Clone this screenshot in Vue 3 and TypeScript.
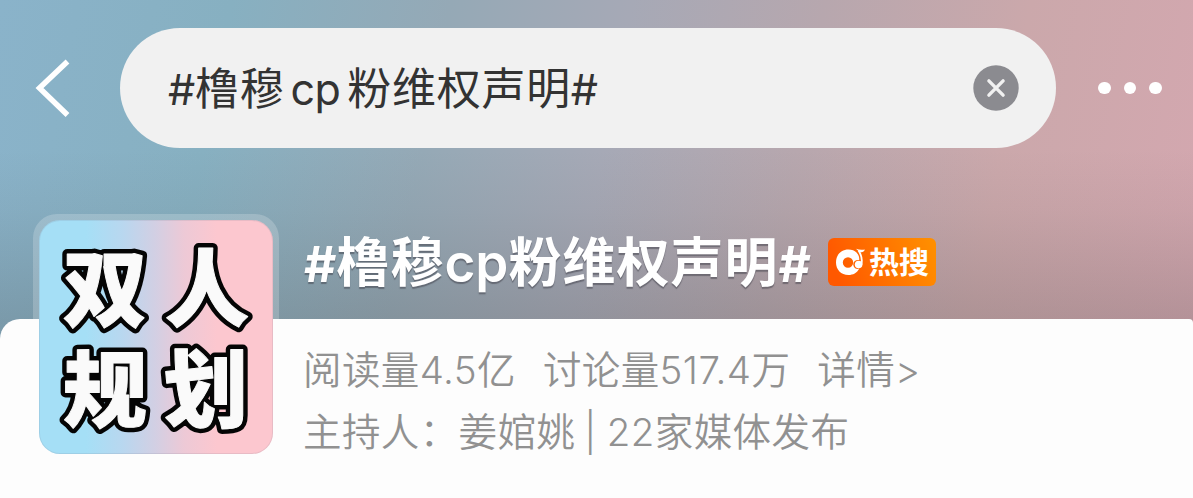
<script setup lang="ts">
import { ref } from "vue";

interface AvatarChar {
  text: string;
  x: number;
  y: number;
}

const keyword = ref<string[]>(["#", "橹穆", "cp", "粉维权声明", "#"]);
const avatarChars: AvatarChar[] = [
  { text: "双", x: 66, y: 100 },
  { text: "人", x: 168, y: 100 },
  { text: "规", x: 66, y: 201 },
  { text: "划", x: 167, y: 201 },
];
const stats: string[] = ["阅读量4.5亿", "讨论量517.4万", "详情>"];

function clearKeyword(): void {
  keyword.value = [];
}
</script>

<template>
  <div class="page">
    <header class="top-bar">
      <svg class="back" viewBox="0 0 40 60" width="40" height="60">
        <path d="M36.500 3.500 L8.500 30 L36.500 57" />
      </svg>
      <div class="search">
        <div class="keyword">
          <span v-for="(part, index) in keyword" :key="index" :class="'part-' + index">{{ part }}</span>
        </div>
        <svg class="clear" viewBox="0 0 46 46" width="46" height="46" @click="clearKeyword">
          <circle cx="23" cy="23" r="22.7" />
          <path d="M15.900 15.900 L30.100 30.100 M30.100 15.900 L15.900 30.100" />
        </svg>
      </div>
      <div class="more"><i></i><i></i><i></i></div>
    </header>

    <section class="title-row">
      <h1><span class="hash">#</span>橹穆<span class="latin">cp</span>粉维权声明<span class="hash">#</span></h1>
      <div class="hot">
        <svg viewBox="0 0 30 28" width="30" height="28">
          <path
            class="disc"
            fill-rule="evenodd"
            d="M13.500 1.500 C17 1.500 19.500 2.500 21.500 4.500 C23.800 7 24.500 9.500 24.200 12 C19 11.500 17 15.500 19 19 C20.300 21 22.500 21.300 24.300 20.500 C22 25 18 27 13.500 27 C6 27 1 21.300 1 14.400 C1 7 6 1.500 13.500 1.500 Z M13 9.300 A5.200 5.200 0 1 0 13 19.700 A5.200 5.200 0 1 0 13 9.300 Z"
          />
          <circle class="note" cx="23.600" cy="16.500" r="3.800" />
          <path class="stem" d="M26.300 17 C27.500 12 26.500 7 23.500 2.500" />
          <path class="note" d="M21 0.800 C24 2 27 2 29.800 1.600 C29.200 4 27 4.800 24.500 4 Z" />
        </svg>
        <span>热搜</span>
      </div>
    </section>

    <main class="panel">
      <div class="stats">
        <span v-for="item in stats" :key="item">{{ item }}</span>
      </div>
      <div class="host">
        <span>主持人：</span><span>姜婠姚</span><span class="bar">|</span><span>22家媒体发布</span>
      </div>
    </main>

    <div class="avatar-frame"></div>
    <svg class="avatar" viewBox="0 0 234 234" width="234" height="234">
      <g class="outline" aria-hidden="true">
        <text v-for="char in avatarChars" :key="char.text" :x="char.x" :y="char.y">{{ char.text }}</text>
      </g>
      <g class="face">
        <text v-for="char in avatarChars" :key="char.text" :x="char.x" :y="char.y">{{ char.text }}</text>
      </g>
    </svg>
  </div>
</template>

<style>
body {
  margin: 0;
}
</style>

<style scoped>
.page {
  position: relative;
  width: 1193px;
  height: 498px;
  overflow: hidden;
  display: flex;
  flex-direction: column;
  font-family: Inter, "Noto Sans CJK SC", sans-serif;
  background:
    linear-gradient(180deg, rgba(75, 75, 75, 0) 150px, rgba(75, 75, 75, 0.06) 210px, rgba(75, 75, 75, 0.23) 320px),
    linear-gradient(101deg, #8ab3ca 0%, #87b0c1 18%, #95a9b6 35%, #a6a9b6 49%, #b7a7ae 64%, #cba8ab 80%, #d5a7b0 100%);
}

.top-bar {
  display: flex;
  align-items: center;
  box-sizing: border-box;
  height: 148px;
  padding: 28px 30px 0 31px;
}

.back {
  margin-right: 49px;
}

.back path {
  fill: none;
  stroke: #fff;
  stroke-width: 5.5;
}

.search {
  display: flex;
  align-items: center;
  justify-content: space-between;
  box-sizing: border-box;
  width: 936px;
  height: 120px;
  padding: 0 37px 0 48px;
  border-radius: 60px;
  background: #f1f1f1;
}

.keyword {
  display: flex;
  align-items: baseline;
  margin-top: 2px;
  font-size: 44px;
  line-height: 60px;
  letter-spacing: 0.7px;
  color: #333;
}

.part-0,
.part-4 {
  font-size: 43px;
  letter-spacing: -0.2px;
}

.part-2 {
  margin: 0 7px 0 6px;
  font-size: 43px;
  letter-spacing: -0.5px;
}

.clear circle {
  fill: #8b8b90;
}

.clear path {
  stroke: #f1f1f1;
  stroke-width: 3.4;
  stroke-linecap: round;
}

.more {
  display: flex;
  gap: 13px;
  margin-left: 42px;
}

.more i {
  width: 12.5px;
  height: 12.5px;
  border-radius: 50%;
  background: #fff;
}

.title-row {
  display: flex;
  align-items: center;
  box-sizing: border-box;
  height: 120px;
  margin: 28px 0 23px;
  padding: 51px 0 0 304px;
}

h1 {
  width: 524px;
  margin: 3px 0 0;
  font-size: 53px;
  font-weight: 700;
  line-height: 60px;
  letter-spacing: 1px;
  white-space: nowrap;
  color: #fff;
  text-shadow: 0 2px 1px rgba(60, 60, 70, 0.5);
}

.hash {
  font-size: 50px;
  letter-spacing: 0;
}

.latin {
  font-weight: 600;
  letter-spacing: 0;
}

.hot {
  display: flex;
  align-items: center;
  box-sizing: border-box;
  width: 108px;
  height: 48px;
  padding-left: 7px;
  border-radius: 6px;
  color: #fff;
  font-size: 30px;
  font-weight: 700;
  line-height: 48px;
  background: linear-gradient(70deg, #ff5800 10%, #ff9100 100%);
}

.hot span {
  margin-left: 4px;
}

.disc,
.note {
  fill: #fff;
}

.stem {
  fill: none;
  stroke: #fff;
  stroke-width: 1.8;
}

.panel {
  box-sizing: border-box;
  flex: 1;
  padding: 20px 0 0 303px;
  border-radius: 20px 4px 0 0;
  background: #fdfdfd;
  color: #919191;
  font-size: 38.5px;
  font-weight: 350;
  line-height: 62px;
  letter-spacing: 0.4px;
  white-space: nowrap;
}

.stats,
.host {
  display: flex;
  align-items: center;
  height: 62px;
}

.stats {
  gap: 27px;
}

.bar {
  margin: 0 10px 0 9px;
}

.avatar-frame {
  position: absolute;
  left: 33px;
  top: 214px;
  width: 246px;
  height: 105px;
  border-radius: 24px 24px 0 0;
  background: rgba(255, 255, 255, 0.2);
}

.avatar {
  position: absolute;
  left: 39px;
  top: 220px;
  border-radius: 21px;
  box-shadow: inset 0 0 0 1px rgba(120, 120, 140, 0.15);
  background: linear-gradient(90deg, #a5dff6 20%, #b9d7ef 36%, #d3cfe3 50%, #edc9d6 62%, #fcc7cf 76%);
}

.avatar text {
  font-size: 84px;
  font-weight: 900;
  text-anchor: middle;
  stroke-linejoin: round;
}

.outline text {
  fill: #050505;
  stroke: #050505;
  stroke-width: 10px;
}

.face text {
  fill: #fafafa;
  stroke: #fafafa;
  stroke-width: 1px;
}
</style>
